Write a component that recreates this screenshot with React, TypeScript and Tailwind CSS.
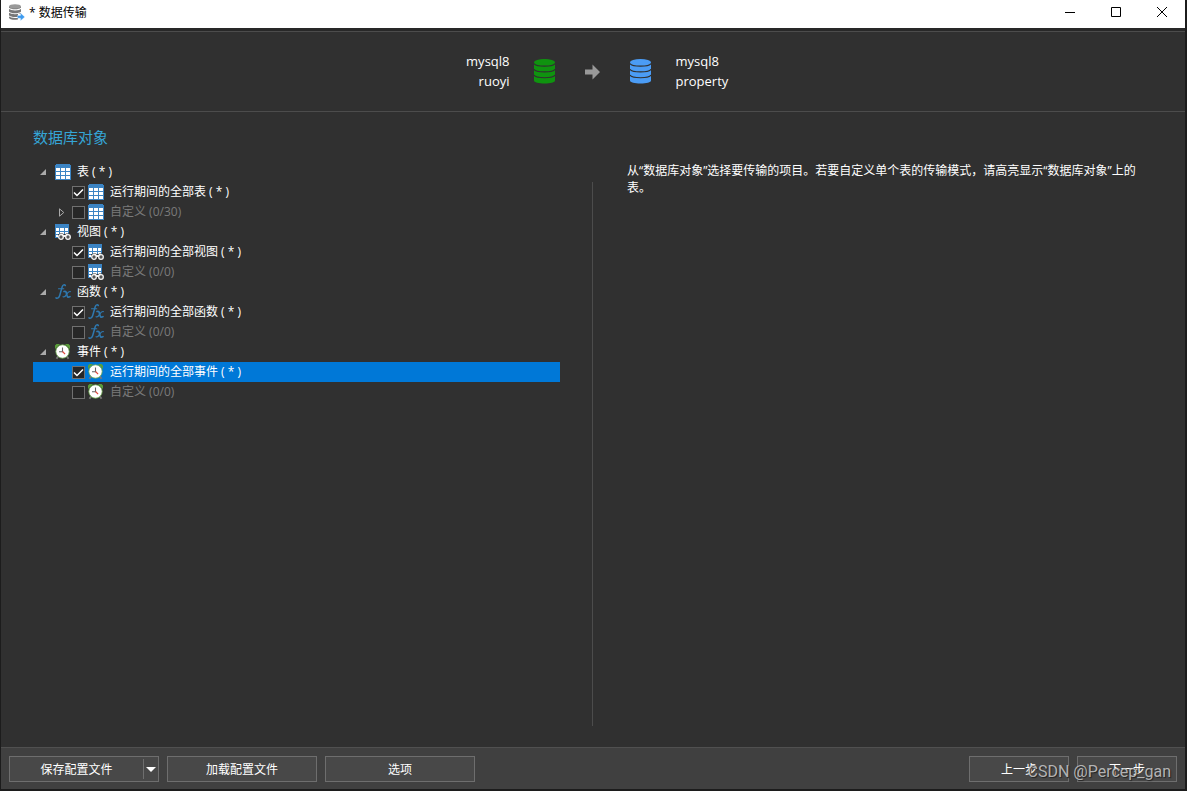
import React, { useState } from 'react';
import clsx from 'clsx';

type Kind = 'table' | 'view' | 'function' | 'event';

interface ObjectGroup {
  kind: Kind;
  name: string;
  allLabel: string;
  customLabel: string;
  expandable?: boolean;
}

const GROUPS: ObjectGroup[] = [
  { kind: 'table', name: '表 ( * )', allLabel: '运行期间的全部表 ( * )', customLabel: '自定义 (0/30)', expandable: true },
  { kind: 'view', name: '视图 ( * )', allLabel: '运行期间的全部视图 ( * )', customLabel: '自定义 (0/0)' },
  { kind: 'function', name: '函数 ( * )', allLabel: '运行期间的全部函数 ( * )', customLabel: '自定义 (0/0)' },
  { kind: 'event', name: '事件 ( * )', allLabel: '运行期间的全部事件 ( * )', customLabel: '自定义 (0/0)' },
];

const TableIcon = () => (
  <svg width="16" height="16" viewBox="0 0 16 16" shapeRendering="crispEdges">
    <path d="M1 0h14v1h1v15H0V1h1z" fill="#3b84c4" />
    <path d="M1 4h4v3H1zM6 4h4v3H6zM11 4h4v3h-4zM1 8h4v3H1zM6 8h4v3H6zM11 8h4v3h-4zM1 12h4v3H1zM6 12h4v3H6zM11 12h4v3h-4z" fill="#fff" />
  </svg>
);

const ViewIcon = () => (
  <svg width="16" height="16" viewBox="0 0 16 16">
    <g shapeRendering="crispEdges">
      <path d="M0 0h14v10H0zM0 10h3v4H0z" fill="#3b84c4" />
      <path d="M1 4h3v3H1zM5 4h4v3H5zM10 4h3v3h-3zM1 8h3v2H1zM5 8h4v2H5zM10 8h3v2h-3zM1 11h2v2H1z" fill="#fff" />
    </g>
    <path d="M3 13l1.800-3.500h3l1.700 1 1.700-1h3L16 13v1H3z" fill="#303030" />
    <path d="M4.500 12L6 10h1.800l1 1h1.400l1-1H13l1.500 2v1h-10z" fill="#f2f2f2" />
    <circle cx="6" cy="13" r="2.300" fill="#555" stroke="#f6f6f6" strokeWidth="1.300" />
    <circle cx="13" cy="13" r="2.300" fill="#555" stroke="#f6f6f6" strokeWidth="1.300" />
  </svg>
);

const FunctionIcon = () => (
  <svg width="16" height="16" viewBox="0 0 16 16" fill="none" stroke="#2f78ae" strokeLinecap="round">
    <path d="M10.300 1.500C9.600.3 7.900.6 7.200 2.800L4.700 11.500C4 14 2.300 14.800 1 13.900" strokeWidth="1.500" />
    <path d="M3.500 4.800h5.300" strokeWidth="1.100" />
    <path d="M9 7.500c1.900-.6 2.200.6 2.700 2.900.5 2.700 1.300 3.500 3.300 2.200" strokeWidth="1.700" />
    <path d="M15.300 7.600c-1.800-.6-2.900 1.400-3.900 3-.9 1.600-1.900 2.800-3.400 2.200" strokeWidth="1.200" />
  </svg>
);

const EventIcon = () => (
  <svg width="16" height="16" viewBox="0 0 16 16">
    <path d="M3 12.500l-1.500 2.300M12 12.500l1.500 2.300" stroke="#777" strokeWidth="1.800" />
    <path d="M0 5V1.500L1.500 0H5zM15 5V1.500L13.500 0H10z" fill="#5a9e3a" />
    <circle cx="7.500" cy="7.500" r="6.700" fill="#fff" stroke="#64a548" strokeWidth=".8" />
    <path d="M7.500 3.500v4.200H4" fill="none" stroke="#666" strokeWidth="1.100" />
    <path d="M7.500 7.500l2.600 2.600" stroke="#e0483c" strokeWidth="1.200" />
  </svg>
);

const KindIcon = ({ kind }: { kind: Kind }) => (
  <span className="w-4 h-4 shrink-0">
    {kind === 'table' && <TableIcon />}
    {kind === 'view' && <ViewIcon />}
    {kind === 'function' && <FunctionIcon />}
    {kind === 'event' && <EventIcon />}
  </span>
);

const DatabaseIcon = ({ className }: { className: string }) => (
  <svg width="21" height="25" viewBox="0 0 21 25" className={className}>
    <path d="M0 3.500v18C0 23.400 4.700 24.500 10.500 24.500S21 23.400 21 21.500v-18z" fill="currentColor" />
    <ellipse cx="10.500" cy="3.300" rx="10.500" ry="3.300" fill="currentColor" />
    <path d="M0 4.500c1 1.900 5 2.600 10.500 2.600S20 6.400 21 4.500M0 10.300c1 1.900 5 2.600 10.500 2.600s9.500-.7 10.500-2.600M0 16.100c1 1.900 5 2.600 10.500 2.600s9.500-.7 10.500-2.600" fill="none" stroke="#303030" strokeWidth="1.100" />
  </svg>
);

const TransferIcon = () => (
  <svg width="16" height="17" viewBox="0 0 16 17">
    <path d="M0 2.500v11C0 15 3 15.800 6 15.800c2 0 3-.2 3-.2V10h3V2.500z" fill="#777" />
    <ellipse cx="6" cy="2.400" rx="6" ry="2.200" fill="#999" />
    <path d="M0 4.200c1 1.300 3 1.700 6 1.700s5-.4 6-1.700M0 8c1 1.300 3 1.700 6 1.700S11 9.300 12 8M0 11.800c1 1.300 3 1.700 6 1.700h3" fill="none" stroke="#fff" strokeWidth="1.100" />
    <path d="M8.500 11.500h3V9l4.300 3.900-4.300 3.800v-2.500h-3z" fill="#3d9bf0" stroke="#fff" strokeWidth=".3" />
  </svg>
);

const WindowButton = ({ label, path }: { label: string; path: string }) => (
  <button aria-label={label} className="w-[46px] h-6 flex items-center justify-center">
    <svg width="12" height="12" viewBox="0 0 12 12" fill="none" stroke="#000">
      <path d={path} />
    </svg>
  </button>
);

const ObjectRow = ({
  id,
  kind,
  label,
  muted,
  expandable,
  checked,
  selected,
  onToggle,
}: {
  id: string;
  kind: Kind;
  label: string;
  muted?: boolean;
  expandable?: boolean;
  checked: boolean;
  selected?: boolean;
  onToggle: () => void;
}) => (
  <li className={clsx('h-5 flex items-center pl-6', selected && 'bg-[#0078d7]')}>
    <span className="w-[15px] flex items-center">
      {expandable && (
        <svg width="8" height="9" viewBox="0 0 8 9">
          <path d="M2.500.800v7.400l4.300-3.700z" fill="none" stroke="#aaa" />
        </svg>
      )}
    </span>
    <span className="relative w-[13px] h-[13px] mr-[3px]">
      <input
        id={id}
        type="checkbox"
        checked={checked}
        onChange={onToggle}
        className="peer block appearance-none w-[13px] h-[13px] border border-[#707070] bg-[#272727]"
      />
      <svg width="13" height="13" viewBox="0 0 13 13" className="absolute inset-0 pointer-events-none hidden peer-checked:block">
        <path d="M2 6.500l3 3 6-6" fill="none" stroke="#fff" strokeWidth="1.500" />
      </svg>
    </span>
    <KindIcon kind={kind} />
    <label htmlFor={id} className={clsx('pl-1.5', muted ? 'text-[#7a7a7a]' : 'text-white')}>{label}</label>
  </li>
);

const footerButton = 'h-[26px] pt-0.5 border border-[#6e6e6e] bg-[#484848] text-white text-center';

export default function App() {
  const [checked, setChecked] = useState<Record<string, boolean>>({
    'table-all': true,
    'view-all': true,
    'function-all': true,
    'event-all': true,
  });

  const toggle = (id: string) => setChecked(prev => ({ ...prev, [id]: !prev[id] }));

  return (
    <div className="min-h-screen flex flex-col bg-[#303030] text-white text-[12px] leading-4 border-l border-r-2 border-b-2 border-[#1c1c1c] font-['Open_Sans','Noto_Sans_CJK_SC',sans-serif]">
      <header className="h-7 bg-white text-black flex items-start justify-between">
        <h1 className="flex items-center gap-1 pl-2 h-6">
          <TransferIcon />
          <span className="pt-0.5">* 数据传输</span>
        </h1>
        <div className="flex">
          <WindowButton label="最小化" path="M1 6.500h10" />
          <WindowButton label="最大化" path="M1.500 1.500h9v9h-9z" />
          <WindowButton label="关闭" path="M1 1l10 10M11 1L1 11" />
        </div>
      </header>

      <div className="h-1 bg-[#282828] border-b border-[#4c4c4c]" />

      <section className="h-20 grid grid-cols-[1fr_auto_1fr] items-center pr-0.5 border-b border-[#4c4c4c] text-[13px] leading-5">
        <div className="flex items-center justify-end gap-6">
          <p className="text-right pb-0.5">mysql8<br />ruoyi</p>
          <DatabaseIcon className="text-[#0f930f]" />
        </div>
        <svg width="15" height="16" viewBox="0 0 15 16" className="mx-[30px]">
          <path d="M0 5.500h7.500V.500L15 8l-7.500 7.500v-5H0z" fill="#999" />
        </svg>
        <div className="flex items-center gap-[25px]">
          <DatabaseIcon className="text-[#4b9cf5]" />
          <p className="pb-0.5">mysql8<br />property</p>
        </div>
      </section>

      <main className="flex-1 flex pl-8 pr-10">
        <section className="w-[48%] max-w-[527px] shrink-0 pt-[15px]">
          <h2 className="text-[15px] leading-5 text-[#35a5d6]">数据库对象</h2>
          <ul className="pt-[15px]">
            {GROUPS.map(({ kind, name, allLabel, customLabel, expandable }) => (
              <li key={kind}>
                <div className="h-5 flex items-center pl-1.5">
                  <svg width="16" height="8" viewBox="0 0 16 8">
                    <path d="M7 1v6H1z" fill="#aaa" />
                  </svg>
                  <KindIcon kind={kind} />
                  <span className="pl-1.5">{name}</span>
                </div>
                <ul>
                  <ObjectRow
                    id={`${kind}-all`}
                    kind={kind}
                    label={allLabel}
                    checked={!!checked[`${kind}-all`]}
                    selected={kind === 'event'}
                    onToggle={() => toggle(`${kind}-all`)}
                  />
                  <ObjectRow
                    id={`${kind}-custom`}
                    kind={kind}
                    label={customLabel}
                    muted
                    expandable={expandable}
                    checked={!!checked[`${kind}-custom`]}
                    onToggle={() => toggle(`${kind}-custom`)}
                  />
                </ul>
              </li>
            ))}
          </ul>
        </section>
        <div className="w-px shrink-0 bg-[#4c4c4c] ml-8 mt-[70px] mb-[21px]" />
        <p className="flex-1 pl-[34px] pt-[50px] leading-[17px]">
          从“数据库对象”选择要传输的项目。若要自定义单个表的传输模式，请高亮显示“数据库对象”上的表。
        </p>
      </main>

      <footer className="relative h-[42px] flex items-start justify-between px-2 pt-2 bg-[#404040] border-t border-[#505050]">
        <div className="flex gap-2">
          <div className="flex w-[150px] h-[26px] items-center border border-[#6e6e6e] bg-[#484848]">
            <button className="flex-1 pt-0.5 text-center">保存配置文件</button>
            <button aria-label="更多保存选项" className="h-5 w-[15px] flex items-center justify-center border-l border-[#6e6e6e]">
              <svg width="10" height="5" viewBox="0 0 10 5">
                <path d="M0 0h10L5 5z" fill="#fff" />
              </svg>
            </button>
          </div>
          <button className={clsx(footerButton, 'w-[150px]')}>加载配置文件</button>
          <button className={clsx(footerButton, 'w-[150px]')}>选项</button>
        </div>
        <div className="flex gap-2">
          <button className={clsx(footerButton, 'w-[100px]')}>上一步</button>
          <button className={clsx(footerButton, 'w-[100px]')}>下一步</button>
        </div>
        <span className="absolute right-3.5 top-3.5 pointer-events-none text-[16px] leading-5 text-[#c4c4c4]/90 text-shadow-[1px_1px_1px_#222] font-['Roboto',sans-serif]">
          CSDN @Percep_gan
        </span>
      </footer>
    </div>
  );
}
